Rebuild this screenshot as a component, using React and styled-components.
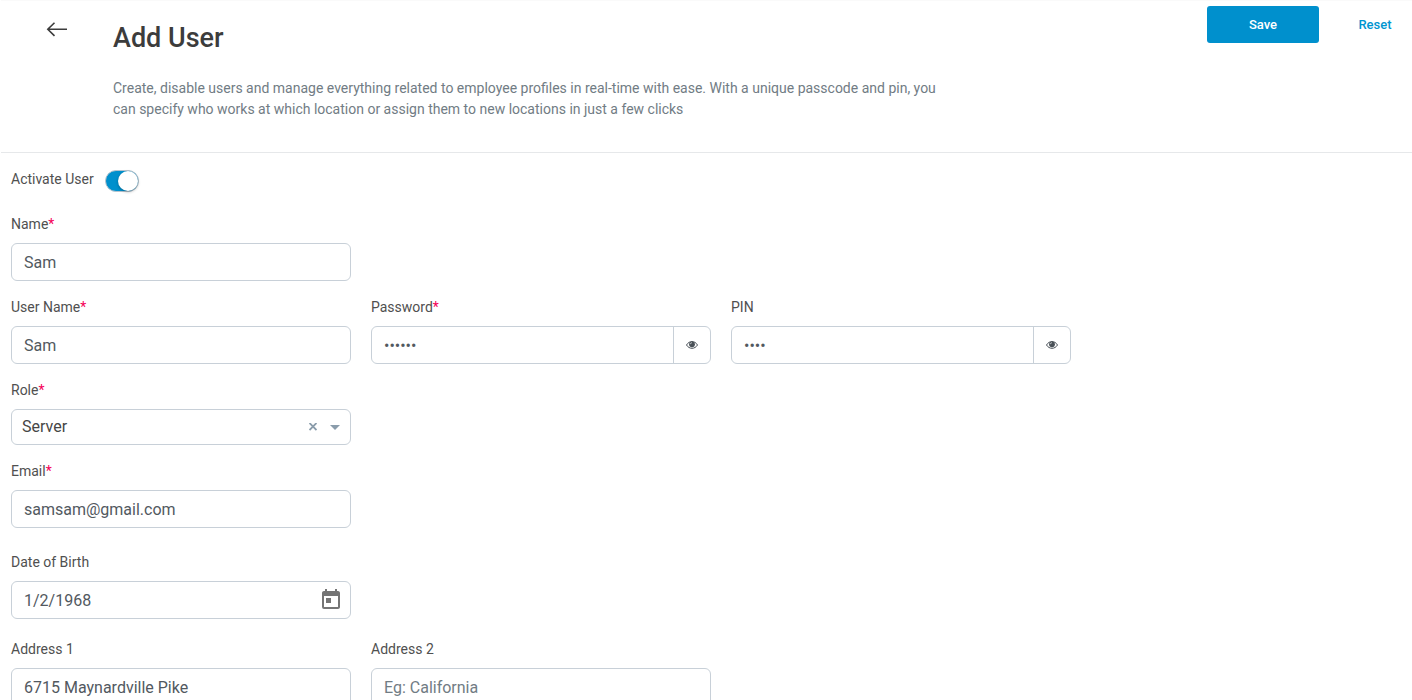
import React, {useState} from 'react'
import styled, {createGlobalStyle} from 'styled-components'
import {MdToday} from 'react-icons/md'

const GlobalStyle = createGlobalStyle`
  * {
    box-sizing: border-box;
  }
  body {
    margin: 0;
    background: #fff;
    color: #505050;
    font-family: Roboto, 'Liberation Sans', sans-serif;
    font-size: 14px;
    line-height: 21px;
  }
  button,
  input,
  select {
    font-family: inherit;
  }
`

const Header = styled.header`
  display: flex;
  align-items: flex-start;
  margin-left: 1px;
  padding: 6px 1px 32px 44px;
  border-bottom: 1px solid #e6e8ea;
  box-shadow: inset 0 1px #fafafa;
`
const BackLink = styled.a`
  flex: none;
  width: 68px;
  margin-top: 11px;
  color: #3c3c3c;

  svg {
    display: block;
  }
`
const Intro = styled.div`
  flex: 0 1 840px;
`
const Title = styled.h1`
  margin: 19px 0 26px;
  color: #3c3c3c;
  font-size: 27px;
  font-weight: 500;
  line-height: 27px;
`
const Description = styled.p`
  margin: 0;
  color: #717c84;
`
const Actions = styled.div`
  display: flex;
  gap: 20px;
  margin-left: auto;
`
const Button = styled.button`
  height: 37px;
  min-width: ${props => (props.$primary ? '112px' : '72px')};
  border: 0;
  border-radius: 3px;
  background: ${props => (props.$primary ? '#0090cd' : 'transparent')};
  color: ${props => (props.$primary ? '#fff' : '#0095d0')};
  font-size: 13px;
  font-weight: 500;
  cursor: pointer;
`

const Form = styled.form`
  padding: 16px 11px;
`
const SwitchRow = styled.label`
  display: flex;
  align-items: flex-start;
  gap: 11px;
  margin-bottom: 22px;
`
const Switch = styled.input`
  appearance: none;
  display: flex;
  justify-content: flex-end;
  width: 34px;
  height: 22px;
  margin: 1px 0 0;
  border: 1px solid #b8c4ce;
  border-radius: 11px;
  background: #b8c4ce;
  cursor: pointer;

  &::before {
    content: '';
    width: 20px;
    height: 20px;
    border-radius: 50%;
    background: #fff;
    box-shadow: 0 1px 3px rgba(0, 0, 0, 0.3);
  }
  &:checked {
    background: #0090cd;
  }
  &:not(:checked) {
    justify-content: flex-start;
  }
`
const Row = styled.div`
  display: grid;
  grid-template-columns: repeat(3, minmax(0, 340px));
  gap: 20px;
  margin-bottom: ${props => props.$space || 16}px;
`
const Label = styled.label`
  display: block;
  margin-bottom: 8px;
`
const Required = styled.span`
  color: #f50057;
`
const Control = styled.div`
  display: flex;
  align-items: center;
  height: ${props => (props.$compact ? 36 : 38)}px;
  border: 1px solid #c8d0d8;
  border-radius: 6px;
  background: #fff;
`
const Input = styled.input`
  flex: 1;
  min-width: 0;
  height: 100%;
  padding: 0 12px;
  border: 0;
  outline: 0;
  background: transparent;
  color: #52595f;
  font-size: 16px;

  &::placeholder {
    color: #717c84;
  }
`
const Select = styled.select`
  appearance: none;
  flex: 1;
  min-width: 0;
  height: 100%;
  padding: 0 10px 2px;
  border: 0;
  outline: 0;
  background: transparent;
  color: #464646;
  font-size: 16px;
`
const IconButton = styled.button`
  display: flex;
  align-items: center;
  justify-content: center;
  width: ${props => props.$width}px;
  height: 100%;
  padding: 0;
  border: 0;
  border-left: ${props => (props.$divided ? '1px solid #c8d0d8' : 0)};
  background: transparent;
  color: ${props => props.$color || '#495057'};
  cursor: pointer;
`
const Caret = styled.svg`
  flex: none;
  margin: 0 10px 0 7px;
  fill: #8a9cab;
  pointer-events: none;
`

const EyeIcon = () => (
  <svg width="12" height="10" viewBox="0 0 12 10" aria-hidden="true">
    <path
      d="M.5 5C3.200 .4 8.800 .4 11.500 5 8.800 9.400 3.200 9.400 .5 5Z"
      fill="none"
      stroke="currentColor"
    />
    <circle cx="6" cy="4.300" r="2.900" fill="currentColor" />
    <path
      d="M4.400 4.200A1.700 1.700 0 0 1 6 2.600"
      fill="none"
      stroke="#fff"
      strokeWidth=".6"
    />
  </svg>
)

const Field = ({id, label, required, compact, children}) => (
  <div>
    <Label htmlFor={id}>
      {label}
      {required && <Required>*</Required>}
    </Label>
    <Control $compact={compact}>{children}</Control>
  </div>
)

const SecretField = ({id, label, required, value}) => {
  const [visible, setVisible] = useState(false)
  return (
    <Field id={id} label={label} required={required}>
      <Input
        id={id}
        type={visible ? 'text' : 'password'}
        defaultValue={value}
        autoComplete="off"
      />
      <IconButton
        type="button"
        $width={37}
        $divided
        aria-label={`Show ${label}`}
        onClick={() => setVisible(!visible)}
      >
        <EyeIcon />
      </IconButton>
    </Field>
  )
}

const App = () => {
  const [role, setRole] = useState('Server')
  return (
    <>
      <GlobalStyle />
      <Header>
        <BackLink href="#users" aria-label="Back">
          <svg width="24" height="24" viewBox="0 0 24 24" fill="none">
            <path
              d="M22 12.300H3M9.500 5.700L2.800 12.300L9.500 18.900"
              stroke="currentColor"
              strokeWidth="1.600"
            />
          </svg>
        </BackLink>
        <Intro>
          <Title>Add User</Title>
          <Description>
            Create, disable users and manage everything related to employee
            profiles in real-time with ease. With a unique passcode and pin, you
            can specify who works at which location or assign them to new
            locations in just a few clicks
          </Description>
        </Intro>
        <Actions>
          <Button type="submit" form="user-form" $primary>
            Save
          </Button>
          <Button type="reset" form="user-form">
            Reset
          </Button>
        </Actions>
      </Header>
      <Form id="user-form" onSubmit={e => e.preventDefault()}>
        <SwitchRow>
          Activate User
          <Switch type="checkbox" role="switch" defaultChecked />
        </SwitchRow>
        <Row>
          <Field id="name" label="Name" required>
            <Input id="name" defaultValue="Sam" />
          </Field>
        </Row>
        <Row>
          <Field id="username" label="User Name" required>
            <Input id="username" defaultValue="Sam" />
          </Field>
          <SecretField id="password" label="Password" required value="sam123" />
          <SecretField id="pin" label="PIN" value="1234" />
        </Row>
        <Row>
          <Field id="role" label="Role" required compact>
            <Select
              id="role"
              value={role}
              onChange={e => setRole(e.target.value)}
            >
              <option value="" />
              <option>Server</option>
              <option>Manager</option>
            </Select>
            <IconButton
              type="button"
              $width={20}
              $color="#8a9cab"
              aria-label="Clear role"
              onClick={() => setRole('')}
            >
              <svg width="8" height="8" viewBox="0 0 8 8">
                <path
                  d="M.5 0L7.500 7M7.500 0L.5 7"
                  stroke="currentColor"
                  strokeWidth="1.800"
                />
              </svg>
            </IconButton>
            <Caret width="10" height="5" viewBox="0 0 10 5">
              <path d="M0 0H10L5 5Z" />
            </Caret>
          </Field>
        </Row>
        <Row $space={24}>
          <Field id="email" label="Email" required>
            <Input id="email" type="email" defaultValue="samsam@gmail.com" />
          </Field>
        </Row>
        <Row $space={20}>
          <Field id="dob" label="Date of Birth">
            <Input id="dob" defaultValue="1/2/1968" />
            <IconButton
              type="button"
              $width={38}
              $color="#757575"
              aria-label="Open calendar"
            >
              <MdToday size={24} />
            </IconButton>
          </Field>
        </Row>
        <Row>
          <Field id="address1" label="Address 1">
            <Input id="address1" defaultValue="6715 Maynardville Pike" />
          </Field>
          <Field id="address2" label="Address 2">
            <Input id="address2" placeholder="Eg: California" />
          </Field>
        </Row>
      </Form>
    </>
  )
}

export default App
